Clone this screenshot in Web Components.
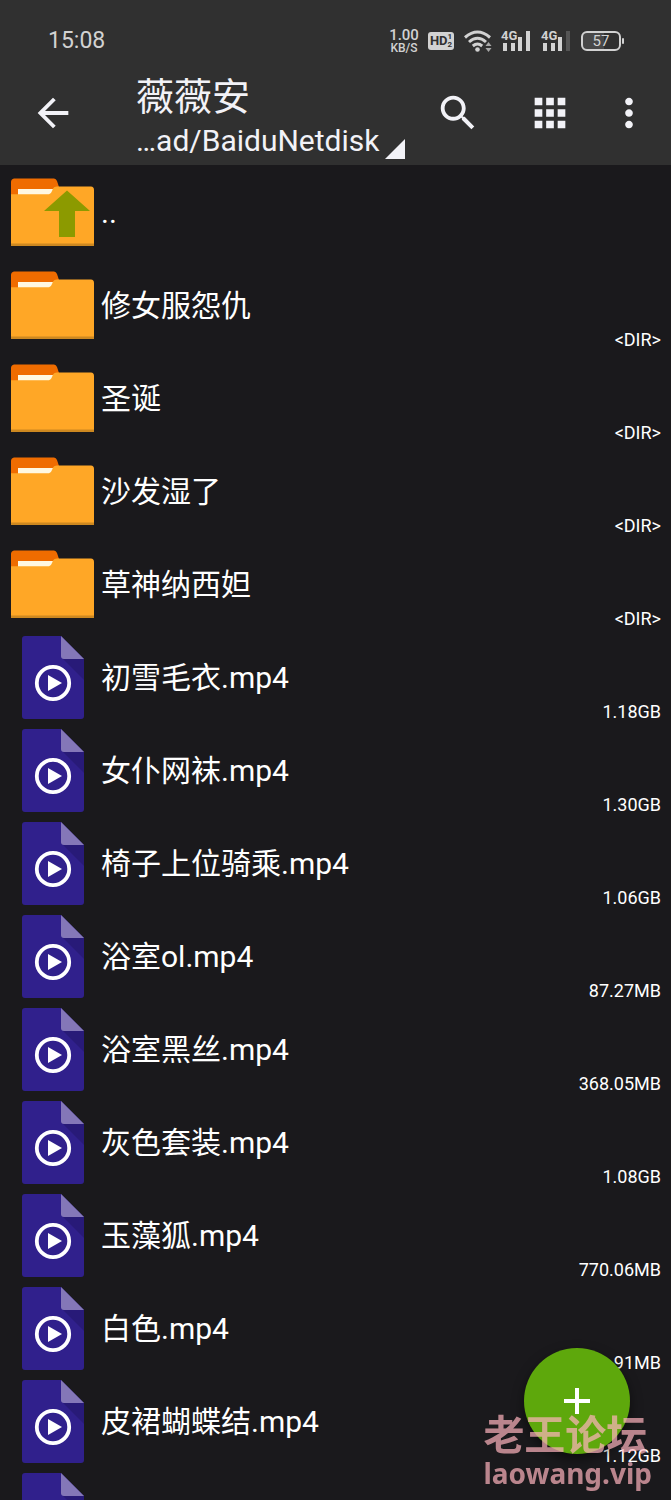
<!DOCTYPE html>
<html lang="zh-CN">
<head>
<meta charset="utf-8">
<meta name="viewport" content="width=device-width, initial-scale=1">
<title>薇薇安</title>
<style>
  html, body { height: 100%; margin: 0; }
  body { background: #1a191c; color: #fff; overflow: hidden; font-family: Roboto, "Noto Sans CJK SC", sans-serif; }
</style>
</head>
<body>
<file-manager></file-manager>

<template id="t-manager">
  <style>
    :host { display: flex; flex-direction: column; height: 100vh; overflow: hidden; }
    header { background: #303030; flex: none; }
    main { flex: 1; min-height: 0; overflow: hidden; }
    ul { list-style: none; margin: 0; padding: 0; }
  </style>
  <header>
    <status-bar></status-bar>
    <app-bar><span slot="title">薇薇安</span><span slot="path">…ad/BaiduNetdisk</span></app-bar>
  </header>
  <main><ul></ul></main>
  <add-button></add-button>
  <site-mark><span slot="name">老王论坛</span><span slot="url">laowang.vip</span></site-mark>
</template>

<template id="t-status">
  <style>
    :host { display: flex; align-items: center; justify-content: space-between; height: 60px; padding: 22px 47px 0 48px; box-sizing: border-box; color: #d2d2d2; }
    .clock { font-size: 23px; line-height: 24px; }
    .icons { display: flex; align-items: center; gap: 9px; }
    .rate { display: grid; justify-items: center; font-weight: 500; font-size: 15px; line-height: 13px; width: 30px; }
    .rate small { font-size: 12px; line-height: 12px; }
    .hd { display: flex; align-items: center; justify-content: center; width: 26px; height: 18px; border-radius: 3px; background: #d2d2d2; color: #303030; font-weight: 700; font-size: 13px; line-height: 18px; }
    .hd span { display: grid; font-size: 8px; line-height: 8px; }
    .hd i { font-style: normal; }
    .signal { position: relative; width: 31px; height: 22px; }
    .signal b { position: absolute; left: 0; top: 0; font-size: 13px; line-height: 11px; font-weight: 700; }
    .battery { display: flex; align-items: center; }
    .cell { box-sizing: border-box; width: 40px; height: 20px; border: 2px solid #d2d2d2; border-radius: 6px; font-size: 15px; line-height: 16px; text-align: center; background: linear-gradient(90deg, #484848 57%, #303030 57%); }
    .cap { width: 2px; height: 6px; margin-left: 1px; background: #d2d2d2; border-radius: 1px; }
    svg { display: block; }
  </style>
  <span class="clock">15:08</span>
  <div class="icons">
    <div class="rate"><span>1.00</span><small>KB/S</small></div>
    <div class="hd">HD<span><i>1</i><i>2</i></span></div>
    <svg width="29" height="22" viewBox="-2 0 29 22" aria-hidden="true">
      <g fill="none" stroke="#d2d2d2" stroke-width="3">
        <path d="M0 7.500Q12.500-3.500 25 7.500"/><path d="M4 12Q12.500 4.500 21 12"/><path d="M7.800 16Q12.500 12 17.200 16"/>
      </g>
      <circle cx="12.500" cy="19.500" r="2.300" fill="#d2d2d2"/>
      <path d="M20.500 16l3-4 3 4zM20.500 18l3 4 3-4z" fill="#a8a8a8"/>
    </svg>
    <div class="signal"><b>4G</b><svg width="31" height="22" viewBox="0 0 31 22" fill="#d2d2d2" aria-hidden="true"><path d="M2 13h4v8H2zM10 13h4v8h-4zM17 7h4v14h-4zM25 1h4v20h-4z"/></svg></div>
    <div class="signal"><b>4G</b><svg width="31" height="22" viewBox="0 0 31 22" fill="#d2d2d2" aria-hidden="true"><path d="M2 13h4v8H2zM10 13h4v8h-4zM17 7h4v14h-4z"/><path fill="#555" d="M25 1h4v20h-4z"/></svg></div>
    <div class="battery"><div class="cell">57</div><div class="cap"></div></div>
  </div>
</template>

<template id="t-appbar">
  <style>
    :host { display: flex; align-items: center; height: 105px; padding: 0 9px 0 7px; box-sizing: border-box; color: #f2f2f7; }
    button { display: flex; align-items: center; justify-content: center; flex: none; height: 92px; width: 92px; padding: 0; border: 0; background: none; color: inherit; font: inherit; }
    .more { width: 66px; }
    .place { flex: 1; min-width: 0; display: block; height: auto; padding: 12px 0 0; margin-left: 37px; text-align: left; }
    .title { display: block; font-size: 38px; line-height: 44px; }
    .path { display: flex; align-items: flex-end; gap: 6px; font-size: 30px; line-height: 44px; white-space: nowrap; }
    .path svg { margin-bottom: 4px; }
    svg { display: block; flex: none; fill: currentColor; }
  </style>
  <button type="button" aria-label="返回"><svg width="46" height="46" viewBox="0 0 24 24"><path d="M20 11H7.830l5.590-5.590L12 4l-8 8 8 8 1.410-1.410L7.830 13H20v-2z"/></svg></button>
  <button type="button" class="place">
    <span class="title"><slot name="title"></slot></span>
    <span class="path"><slot name="path"></slot><svg width="20" height="20" viewBox="0 0 20 20"><path d="M20 0v20H0z"/></svg></span>
  </button>
  <button type="button" aria-label="搜索"><svg width="46" height="46" viewBox="0 0 24 24"><path d="M15.500 14h-.79l-.28-.27C15.410 12.590 16 11.110 16 9.500 16 5.910 13.090 3 9.500 3S3 5.910 3 9.500 5.910 16 9.500 16c1.610 0 3.090-.59 4.230-1.570l.27.28v.79l5 4.990L20.490 19l-4.990-5zm-6 0C7.010 14 5 11.990 5 9.500S7.010 5 9.500 5 14 7.010 14 9.500 11.990 14 9.500 14z"/></svg></button>
  <button type="button" aria-label="视图"><svg width="46" height="46" viewBox="0 0 24 24"><path d="M4 8h4V4H4zm6 12h4v-4h-4zm-6 0h4v-4H4zm0-6h4v-4H4zm6 0h4v-4h-4zm6-10v4h4V4zm-6 4h4V4h-4zm6 6h4v-4h-4zm0 6h4v-4h-4z"/></svg></button>
  <button type="button" class="more" aria-label="更多"><svg width="46" height="46" viewBox="0 0 24 24"><path d="M12 8c1.100 0 2-.9 2-2s-.9-2-2-2-2 .9-2 2 .9 2 2 2zm0 2c-1.100 0-2 .9-2 2s.9 2 2 2 2-.9 2-2-.9-2-2-2zm0 6c-1.100 0-2 .9-2 2s.9 2 2 2 2-.9 2-2-.9-2-2-2z"/></svg></button>
</template>

<template id="t-row">
  <style>
    :host { display: block; }
    a { display: grid; grid-template-columns: 84px 1fr auto; column-gap: 6px; align-items: center; height: 93px; padding: 0 10px 0 11px; box-sizing: border-box; color: #fff; text-decoration: none; }
    .name { padding-top: 3px; font-size: 30px; line-height: 44px; white-space: nowrap; }
    .size { align-self: end; font-size: 18px; line-height: 22px; }
  </style>
  <a href="#"><file-icon></file-icon><span class="name"><slot name="name"></slot></span><span class="size"><slot name="size"></slot></span></a>
</template>

<template id="t-icon">
  <style>
    :host { display: flex; justify-content: center; }
    svg { display: none; }
    :host([kind="video"]) .video, :host([kind="folder"]) .folder, :host([kind="up"]) .folder { display: block; }
    .arrow { display: none; }
    :host([kind="up"]) .arrow { display: block; }
  </style>
  <svg class="folder" width="84" height="68" viewBox="0 0 84 68" aria-hidden="true">
    <path fill="#ef6c00" d="M0 20V4Q0 1 3 0.500H43Q45 0.500 46 3L48 9V20z"/>
    <path fill="#fff8e1" d="M7 11H44V18H7z"/>
    <path fill="#ffa726" d="M0 16.200H38Q40 16.200 41 13L42 10.500Q43 8.500 46 8.500H80Q83 8.500 83 12V68H0z"/>
    <path fill="#cd8820" d="M0 65.500H83V68H0z"/>
    <path class="arrow" fill="#8c9a00" d="M56 12.500L79 33H64V59H48V33H33z"/>
  </svg>
  <svg class="video" width="62" height="84" viewBox="0 0 62 84" aria-hidden="true">
    <path fill="#30208c" d="M3 1H39L62 24V81Q62 84 59 84H3Q0 84 0 81V4Q0 1 3 1z"/>
    <path fill="#281a78" d="M41 24H62V45z"/>
    <path fill="#8477b8" d="M39 1L62 24H42Q39 24 39 21z"/>
    <circle cx="31" cy="48" r="16.200" fill="none" stroke="#fff" stroke-width="3.800"/>
    <path fill="#fff" d="M26 40L40 48L26 56z"/>
  </svg>
</template>

<template id="t-add">
  <style>
    :host { position: fixed; right: 41px; bottom: 46px; }
    button { display: grid; place-items: center; width: 106px; height: 106px; padding: 0; border: 0; border-radius: 50%; background: #5ea80c; box-shadow: 0 5px 12px rgba(0,0,0,.5); }
  </style>
  <button type="button" aria-label="新建"><svg width="28" height="28" viewBox="0 0 28 28" aria-hidden="true"><path d="M14 1V27M1 14H27" stroke="#fff" stroke-width="4"/></svg></button>
</template>

<template id="t-mark">
  <style>
    :host { position: fixed; right: 19px; bottom: 8px; display: grid; color: rgba(255,180,190,.7); font-weight: 700; pointer-events: none; }
    .name { font: 700 41px/44px "Noto Sans CJK SC", sans-serif; }
    .url { font: 700 28px/38px "Noto Sans", sans-serif; }
  </style>
  <span class="name"><slot name="name"></slot></span>
  <span class="url"><slot name="url"></slot></span>
</template>

<script>
  class Templated extends HTMLElement {
    constructor() {
      super();
      this.attachShadow({ mode: 'open' })
        .append(document.getElementById(this.constructor.template).content.cloneNode(true));
    }
  }

  class FileIcon extends Templated { static template = 't-icon'; }
  class StatusBar extends Templated { static template = 't-status'; }
  class AppBar extends Templated { static template = 't-appbar'; }
  class AddButton extends Templated { static template = 't-add'; }
  class SiteMark extends Templated { static template = 't-mark'; }

  class FileRow extends Templated {
    static template = 't-row';
    connectedCallback() {
      this.shadowRoot.querySelector('file-icon').setAttribute('kind', this.getAttribute('kind'));
    }
  }

  const files = [
    ['up', '..', ''],
    ['folder', '修女服怨仇', '<DIR>'],
    ['folder', '圣诞', '<DIR>'],
    ['folder', '沙发湿了', '<DIR>'],
    ['folder', '草神纳西妲', '<DIR>'],
    ['video', '初雪毛衣.mp4', '1.18GB'],
    ['video', '女仆网袜.mp4', '1.30GB'],
    ['video', '椅子上位骑乘.mp4', '1.06GB'],
    ['video', '浴室ol.mp4', '87.27MB'],
    ['video', '浴室黑丝.mp4', '368.05MB'],
    ['video', '灰色套装.mp4', '1.08GB'],
    ['video', '玉藻狐.mp4', '770.06MB'],
    ['video', '白色.mp4', '91MB'],
    ['video', '皮裙蝴蝶结.mp4', '1.12GB'],
    ['video', '', '']
  ];

  class FileManager extends Templated {
    static template = 't-manager';
    connectedCallback() {
      const list = this.shadowRoot.querySelector('ul');
      for (const [kind, name, size] of files) {
        const item = document.createElement('li');
        const row = document.createElement('file-row');
        row.setAttribute('kind', kind);
        for (const [slot, text] of [['name', name], ['size', size]]) {
          if (!text) continue;
          const span = document.createElement('span');
          span.slot = slot;
          span.textContent = text;
          row.append(span);
        }
        item.append(row);
        list.append(item);
      }
    }
  }

  customElements.define('file-icon', FileIcon);
  customElements.define('status-bar', StatusBar);
  customElements.define('app-bar', AppBar);
  customElements.define('add-button', AddButton);
  customElements.define('site-mark', SiteMark);
  customElements.define('file-row', FileRow);
  customElements.define('file-manager', FileManager);
</script>
</body>
</html>
